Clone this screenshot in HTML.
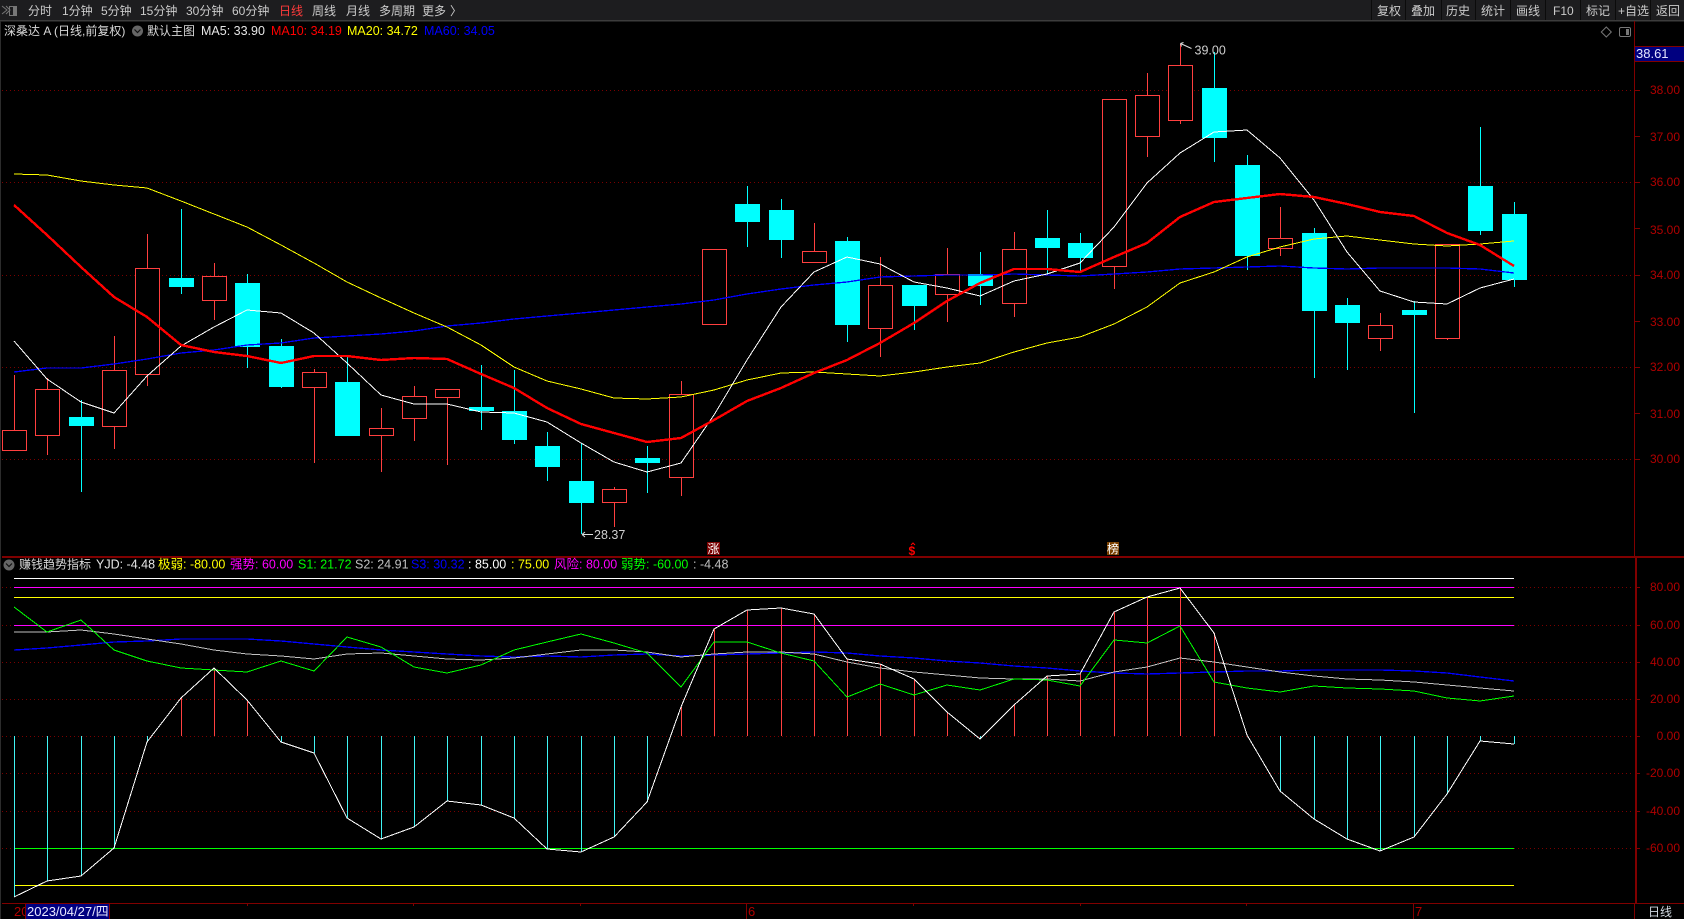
<!DOCTYPE html>
<html><head><meta charset="utf-8"><title>深桑达A 日线</title>
<style>
html,body{margin:0;padding:0;background:#000;width:1684px;height:919px;overflow:hidden}
svg{display:block;position:absolute;left:0;top:0}
text{font-family:"Liberation Sans","Noto Sans CJK SC",sans-serif;font-size:12px}
.tb{fill:#cbcbcb}
.ax{fill:#b00000;font-size:13px;text-anchor:end}
.c{shape-rendering:crispEdges}
</style></head><body>
<svg width="1684" height="919" viewBox="0 0 1684 919" xmlns="http://www.w3.org/2000/svg">
<rect width="1684" height="919" fill="#000"/>
<rect width="1684" height="20" fill="#1d1d1f"/>
<rect y="20" width="1684" height="1.5" fill="#3c3c3c"/>
<rect x="0" y="21" width="1" height="898" fill="#2c2c2c"/>
<g class="c" stroke="#0b0b0b"><path d="M1371.5 0V20M1405.5 0V20M1441.5 0V20M1475.5 0V20M1510.5 0V20M1545.5 0V20M1580.5 0V20M1615.5 0V20M1650.5 0V20"/></g>
<g fill="none" stroke="#777"><path d="M2 6l5 4-5 4M6 6l4 4-4 4" stroke-width="1"/><rect x="9.5" y="6.5" width="7" height="9" stroke-width="1"/></g><rect x="13" y="7" width="3" height="8" fill="#777"/>
<g class="tb">
<text x="28" y="15">分时</text><text x="62" y="15">1分钟</text><text x="101" y="15">5分钟</text><text x="140" y="15">15分钟</text><text x="186" y="15">30分钟</text><text x="232" y="15">60分钟</text>
<text x="279" y="15" fill="#ff3b3b" style="fill:#ff3b3b">日线</text><text x="312" y="15">周线</text><text x="346" y="15">月线</text><text x="379" y="15">多周期</text><text x="422" y="15">更多</text><text x="450" y="15">〉</text>
<text x="1377" y="15">复权</text><text x="1411" y="15">叠加</text><text x="1446" y="15">历史</text><text x="1481" y="15">统计</text><text x="1516" y="15">画线</text><text x="1553" y="15">F10</text><text x="1586" y="15">标记</text><text x="1618" y="15">+自选</text><text x="1656" y="15">返回</text>
</g>
<g>
<text x="4" y="35" fill="#d8d8d8">深桑达 A (日线,前复权)</text>
<circle cx="137.5" cy="31" r="5.5" fill="#666"/><path d="M134.5 29.5l3 3 3-3" fill="none" stroke="#111" stroke-width="1.2"/>
<text x="147" y="35" fill="#d8d8d8">默认主图</text>
<text x="201" y="35" fill="#e6e6e6" style="font-size:12.5px">MA5: 33.90</text>
<text x="271" y="35" fill="#ff0000" style="font-size:12.5px">MA10: 34.19</text>
<text x="347" y="35" fill="#ffff00" style="font-size:12.5px">MA20: 34.72</text>
<text x="424" y="35" fill="#0000ff" style="font-size:12.5px">MA60: 34.05</text>
</g>
<path d="M1606.3 27l5 5-5 5-5-5z" fill="none" stroke="#777"/>
<rect x="1619.5" y="27.5" width="11" height="9" rx="1.5" fill="none" stroke="#777"/><rect x="1626" y="29" width="3" height="6" fill="#777"/>

<!-- grid -->
<g class="c" stroke="#7a0000" stroke-dasharray="1 3" fill="none">
<path d="M2 90.5H1634M2 182.5H1634M2 275.5H1634M2 367.5H1634M2 459.5H1634"/>
<path d="M2 587.5H1634M2 625.5H1634M2 662.5H1634M2 699.5H1634M2 736.5H1634M2 773.5H1634M2 811.5H1634M2 848.5H1634"/>
</g>
<!-- axes -->
<g class="c" fill="#800000">
<rect x="1634" y="21" width="1" height="535"/>
<rect x="1635" y="557" width="2" height="347"/>
<rect x="2" y="556" width="1682" height="2"/>
<rect x="2" y="903" width="1682" height="1"/>
<rect x="1634" y="904" width="1" height="15"/>
<rect x="746" y="904" width="1" height="15"/><rect x="1413" y="904" width="1" height="15"/>
<rect x="247" y="904" width="1" height="2"/><rect x="413" y="904" width="1" height="2"/><rect x="580" y="904" width="1" height="2"/><rect x="913" y="904" width="1" height="2"/><rect x="1080" y="904" width="1" height="2"/><rect x="1246" y="904" width="1" height="2"/>
<path d="M1635 90h5v1h-5zM1635 136h5v1h-5zM1635 182h5v1h-5zM1635 228h5v1h-5zM1635 275h5v1h-5zM1635 321h5v1h-5zM1635 367h5v1h-5zM1635 413h5v1h-5zM1635 459h5v1h-5z"/>
<path d="M1637 587h3v1h-3zM1637 625h3v1h-3zM1637 662h3v1h-3zM1637 699h3v1h-3zM1637 736h3v1h-3zM1637 773h3v1h-3zM1637 811h3v1h-3zM1637 848h3v1h-3z"/>
</g>
<g class="ax">
<text x="1680" y="94">38.00</text><text x="1680" y="141">37.00</text><text x="1680" y="186">36.00</text><text x="1680" y="234">35.00</text><text x="1680" y="279">34.00</text><text x="1680" y="326">33.00</text><text x="1680" y="371">32.00</text><text x="1680" y="418">31.00</text><text x="1680" y="463">30.00</text>
<text x="1680" y="591">80.00</text><text x="1680" y="629">60.00</text><text x="1680" y="666">40.00</text><text x="1680" y="703">20.00</text><text x="1680" y="740">0.00</text><text x="1680" y="777">-20.00</text><text x="1680" y="815">-40.00</text><text x="1680" y="852">-60.00</text>
</g>
<rect x="1634.5" y="46.5" width="50" height="15" fill="#000080" stroke="#800000"/>
<text x="1636" y="58" fill="#e4e4ff" style="font-size:13px">38.61</text>

<!-- candles: red -->
<g class="c" stroke="#ff3f3f" fill="none">
<path d="M14.5 375V430M47.5 378V389M47.5 436V455M114.5 336V370M114.5 427V449M147.5 234V268M147.5 375V386M214.5 263V276M214.5 301V320M314.5 369V372M314.5 388V463M381.5 408V428M381.5 436V472M414.5 386V396M414.5 419V441M447.5 398V465M614.5 487V489M614.5 503V527M681.5 381V394M681.5 478V496M814.5 223V251M880.5 257V285M880.5 328V357M947.5 248V274M947.5 294V322M1014.5 232V249M1014.5 303V317M1114.5 266V289M1147.5 73V95M1147.5 136V157M1180.5 44V65M1180.5 120V124M1280.5 207V238M1280.5 248V256M1380.5 313V325M1380.5 338V351M1447.5 338V340"/>
</g>
<g class="c" stroke="#ff3f3f" fill="#000">
<rect x="2.5" y="430.5" width="24" height="20"/><rect x="35.5" y="389.5" width="24" height="46"/><rect x="102.5" y="370.5" width="24" height="56"/><rect x="135.5" y="268.5" width="24" height="106"/><rect x="202.5" y="276.5" width="24" height="24"/><rect x="302.5" y="372.5" width="24" height="15"/><rect x="369.5" y="428.5" width="24" height="7"/><rect x="402.5" y="396.5" width="24" height="22"/><rect x="435.5" y="389.5" width="24" height="8"/><rect x="602.5" y="489.5" width="24" height="13"/><rect x="669.5" y="394.5" width="24" height="83"/><rect x="702.5" y="249.5" width="24" height="75"/><rect x="802.5" y="251.5" width="24" height="11"/><rect x="868.5" y="285.5" width="24" height="43"/><rect x="935.5" y="274.5" width="24" height="20"/><rect x="1002.5" y="249.5" width="24" height="54"/><rect x="1102.5" y="99.5" width="24" height="167"/><rect x="1135.5" y="95.5" width="24" height="41"/><rect x="1168.5" y="65.5" width="24" height="55"/><rect x="1268.5" y="238.5" width="24" height="10"/><rect x="1368.5" y="325.5" width="24" height="13"/><rect x="1435.5" y="244.5" width="24" height="94"/>
</g>
<!-- candles: cyan -->
<g class="c" stroke="#00ffff" fill="none">
<path d="M81.5 400V492M181.5 209V294M247.5 274V368M281.5 339V388M347.5 357V382M481.5 365V430M514.5 370V444M547.5 432V481M581.5 443V534M647.5 446V493M747.5 186V247M781.5 199V258M847.5 237V342M914.5 306V330M980.5 252V305M1047.5 210V274M1080.5 233V271M1214.5 52V162M1247.5 155V270M1314.5 228V378M1347.5 298V370M1414.5 301V413M1480.5 127V235M1514.5 202V287"/>
</g>
<g class="c" fill="#00ffff">
<rect x="69" y="417" width="25" height="9"/><rect x="169" y="278" width="25" height="9"/><rect x="235" y="283" width="25" height="64"/><rect x="269" y="346" width="25" height="41"/><rect x="335" y="382" width="25" height="54"/><rect x="469" y="407" width="25" height="4"/><rect x="502" y="411" width="25" height="29"/><rect x="535" y="446" width="25" height="21"/><rect x="569" y="481" width="25" height="22"/><rect x="635" y="458" width="25" height="5"/><rect x="735" y="204" width="25" height="18"/><rect x="769" y="210" width="25" height="30"/><rect x="835" y="241" width="25" height="84"/><rect x="902" y="285" width="25" height="21"/><rect x="968" y="274" width="25" height="12"/><rect x="1035" y="238" width="25" height="10"/><rect x="1068" y="243" width="25" height="15"/><rect x="1202" y="88" width="25" height="50"/><rect x="1235" y="165" width="25" height="91"/><rect x="1302" y="233" width="25" height="78"/><rect x="1335" y="305" width="25" height="18"/><rect x="1402" y="310" width="25" height="5"/><rect x="1468" y="186" width="25" height="45"/><rect x="1502" y="214" width="25" height="66"/>
</g>
<!-- MA lines -->
<g fill="none" class="c">
<polyline stroke="#0000ff" stroke-width="1.3" points="14,372 47,368 81,368 114,364 147,359 181,353 214,350 247,345 281,343 314,338 347,336 381,334 414,331 447,326 481,323 514,319 547,316 581,313 614,310 647,307 681,304 714,300 747,294 781,289 814,285 847,282 880,277 914,276 947,275 980,275 1014,274 1047,275 1080,276 1114,274 1147,272 1180,269 1214,268 1247,267 1280,266 1314,268 1347,269 1380,268 1414,268 1447,268 1480,269 1514,273"/>
<polyline stroke="#ffff00" points="14,174 47,175 81,181 114,185 147,188 181,201 214,214 247,227 281,245 314,263 347,282 381,298 414,313 447,327 481,345 514,367 547,381 581,389 614,398 647,399 681,397 714,390 747,380 781,373 814,372 847,374 880,376 914,372 947,367 980,363 1014,352 1047,343 1080,337 1114,324 1147,307 1180,283 1214,272 1247,257 1280,247 1314,239 1347,236 1380,240 1414,244 1447,246 1480,244 1514,241"/>
<polyline stroke="#ffffff" points="14,341 47,379 81,402 114,413 147,376 181,346 214,327 247,310 281,313 314,333 347,363 381,395 414,404 447,404 481,412 514,413 547,422 581,443 614,462 647,472 681,463 714,415 747,360 781,307 814,272 847,257 880,264 914,282 947,288 980,296 1014,281 1047,274 1080,263 1114,227 1147,183 1180,153 1214,132 1247,130 1280,158 1314,200 1347,252 1380,291 1414,302 1447,304 1480,288 1514,279"/>
<polyline stroke="#ff0000" stroke-width="2.4" points="14,205 47,235 81,267 114,297 147,317 181,345 214,352 247,356 281,363 314,356 347,356 381,360 414,358 447,359 481,374 514,388 547,408 581,424 614,433 647,442 681,438 714,420 747,401 781,388 814,373 847,360 880,343 914,323 947,301 980,283 1014,269 1047,269 1080,272 1114,257 1147,243 1180,217 1214,202 1247,198 1280,194 1314,197 1347,204 1380,212 1414,216 1447,233 1480,245 1514,266"/>
</g>
<!-- hi/lo -->
<path d="M1180.5 43.5l11 5M1180.5 43.5l3-1M1180.5 43.5l1 3" fill="none" stroke="#ddd"/>
<text x="1194.5" y="54.5" fill="#cfcfcf" style="font-size:12.5px">39.00</text>
<path d="M582 534.5h11M582 534.5l3-2.5M582 534.5l3 2.5" fill="none" stroke="#ddd"/>
<text x="594" y="539" fill="#cfcfcf" style="font-size:12.5px">28.37</text>
<!-- markers -->
<rect x="707" y="542" width="13" height="13" fill="#7a0000"/><text x="707.5" y="553" fill="#fff">涨</text>
<text x="908.5" y="555" fill="#ff0000" style="font-size:12px;font-weight:bold">$</text><path d="M911 545l2-2 2 2" fill="none" stroke="#f00"/>
<rect x="1107" y="542" width="12" height="13" fill="#7a4000"/><text x="1107" y="553" fill="#fff">榜</text>

<!-- indicator header -->
<circle cx="9" cy="565" r="5.5" fill="#666"/><path d="M6 563.5l3 3 3-3" fill="none" stroke="#111" stroke-width="1.2"/>
<g>
<text x="19" y="568.5" fill="#d8d8d8">赚钱趋势指标</text>
<text x="96" y="568.5" fill="#e6e6e6" style="font-size:12.5px">YJD: -4.48</text>
<text x="158" y="568.5" fill="#ffff00" style="font-size:12.5px">极弱: -80.00</text>
<text x="230" y="568.5" fill="#ff00ff" style="font-size:12.5px">强势: 60.00</text>
<text x="298" y="568.5" fill="#00ff00" style="font-size:12.5px">S1: 21.72</text>
<text x="355" y="568.5" fill="#c0c0c0" style="font-size:12.5px">S2: 24.91</text>
<text x="411" y="568.5" fill="#0000ff" style="font-size:12.5px">S3: 30.32</text>
<text x="468" y="568.5" fill="#ffffff" style="font-size:12.5px">: 85.00</text>
<text x="511" y="568.5" fill="#ffff00" style="font-size:12.5px">: 75.00</text>
<text x="554" y="568.5" fill="#ff00ff" style="font-size:12.5px">风险: 80.00</text>
<text x="621" y="568.5" fill="#00ff00" style="font-size:12.5px">弱势: -60.00</text>
<text x="693" y="568.5" fill="#c0c0c0" style="font-size:12.5px">: -4.48</text>
</g>
<!-- indicator hlines -->
<g class="c" fill="none">
<path d="M14 578.5H1514" stroke="#ffffff"/>
<path d="M14 587.5H1514M14 625.5H1514" stroke="#ff00ff"/>
<path d="M14 597.5H1514M14 885.5H1514" stroke="#ffff00"/>
<path d="M14 848.5H1514" stroke="#00ff00"/>
</g>
<!-- bars -->
<g class="c" fill="none">
<path stroke="#ff4040" d="M181.5 736V698M214.5 736V668M247.5 736V700M681.5 736V707M714.5 736V629M747.5 736V610M781.5 736V608M814.5 736V614M847.5 736V659M880.5 736V664M914.5 736V679M947.5 736V712M1014.5 736V705M1047.5 736V676M1080.5 736V674M1114.5 736V612M1147.5 736V597M1180.5 736V588M1214.5 736V633"/>
<path stroke="#40f4f4" d="M14.5 736V897M47.5 736V881M81.5 736V876M114.5 736V848M147.5 736V742M281.5 736V742M314.5 736V753M347.5 736V818M381.5 736V839M414.5 736V827M447.5 736V801M481.5 736V805M514.5 736V818M547.5 736V849M581.5 736V852M614.5 736V837M647.5 736V802M980.5 736V739M1280.5 736V791M1314.5 736V819M1347.5 736V839M1380.5 736V851M1414.5 736V837M1447.5 736V794M1480.5 736V741M1514.5 736V744"/>
</g>
<!-- indicator lines -->
<g fill="none" class="c">
<polyline stroke="#0000ff" stroke-width="1.3" points="14,650 47,648 81,645 114,642 147,641 181,639 214,639 247,639 281,641 314,644 347,647 381,650 414,652 447,654 481,656 514,657 547,656 581,657 614,655 647,654 681,656 714,655 747,654 781,653 814,652 847,653 880,656 914,658 947,661 980,663 1014,666 1047,668 1080,671 1114,673 1147,674 1180,673 1214,672 1247,671 1280,671 1314,670 1347,670 1380,670 1414,671 1447,673 1480,677 1514,681"/>
<polyline stroke="#c0c0c0" points="14,632 47,632 81,630 114,634 147,639 181,644 214,650 247,654 281,656 314,659 347,654 381,653 414,656 447,659 481,660 514,658 547,654 581,650 614,650 647,652 681,657 714,654 747,652 781,652 814,654 847,662 880,668 914,672 947,675 980,678 1014,679 1047,679 1080,681 1114,672 1147,667 1180,658 1214,662 1247,667 1280,672 1314,676 1347,679 1380,680 1414,682 1447,685 1480,688 1514,691"/>
<polyline stroke="#00ff00" points="14,607 47,632 81,620 114,650 147,661 181,668 214,670 247,672 281,661 314,671 347,637 381,647 414,667 447,673 481,665 514,650 547,642 581,634 614,643 647,653 681,687 714,642 747,642 781,653 814,661 847,697 880,684 914,695 947,685 980,690 1014,679 1047,680 1080,686 1114,640 1147,643 1180,626 1214,682 1247,688 1280,692 1314,686 1347,688 1380,689 1414,691 1447,698 1480,701 1514,696"/>
<polyline stroke="#ffffff" points="14,897 47,881 81,876 114,848 147,742 181,698 214,668 247,700 281,742 314,753 347,818 381,839 414,827 447,801 481,805 514,818 547,849 581,852 614,837 647,802 681,707 714,629 747,610 781,608 814,614 847,659 880,664 914,679 947,712 980,739 1014,705 1047,676 1080,674 1114,612 1147,597 1180,588 1214,633 1247,735 1280,791 1314,819 1347,839 1380,851 1414,837 1447,794 1480,741 1514,744"/>
</g>
<!-- bottom -->
<text x="14" y="916" fill="#b00000" style="font-size:13px">20</text>
<rect x="26" y="904" width="83" height="15" fill="#000080"/>
<rect x="25" y="904" width="1" height="15" fill="#800000"/><rect x="109" y="904" width="1" height="15" fill="#800000"/>
<text x="27" y="916" fill="#e8e8ff" style="font-size:13px">2023/04/27/四</text>
<text x="748" y="916" fill="#b00000" style="font-size:13px">6</text>
<text x="1415" y="916" fill="#b00000" style="font-size:13px">7</text>
<text x="1648" y="916" fill="#d0d8e0">日线</text>
</svg>
</body></html>
